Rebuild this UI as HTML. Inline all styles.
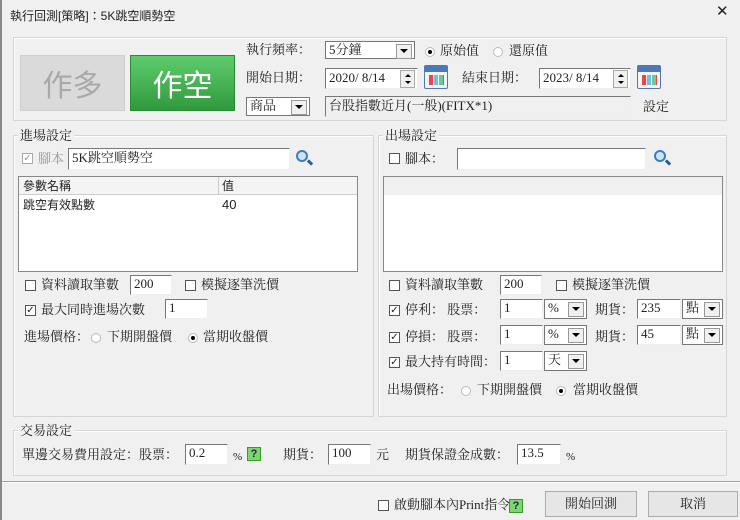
<!DOCTYPE html>
<html><head><meta charset="utf-8"><style>
*{box-sizing:border-box;margin:0;padding:0}
body{width:740px;height:520px;background:#f0f0f0;position:relative;overflow:hidden;font-family:"Liberation Serif","Noto Serif CJK SC","Noto Sans CJK TC",serif;font-size:13px;color:#222}
.a{position:absolute;white-space:nowrap}
.t{line-height:16px}
.grp{position:absolute;border:1px solid #d5d5d5;box-shadow:inset 1px 1px 0 #fff}
.lg{position:absolute;background:#f0f0f0;padding:0 2px;line-height:14px;font-size:13px}
.in{position:absolute;background:#fff;border:1px solid #aaa;border-right-color:#eee;border-bottom-color:#eee;border-top-color:#777;border-left-color:#777;padding-left:3px;line-height:16px;font-size:13px}
.sel{position:absolute;background:#fff;border:1px solid #777;padding-left:3px;font-size:13px;line-height:16px}
.sel:after{content:"";position:absolute;right:2px;top:2px;width:14px;height:13px;background:#f0f0f0;border:1px solid #999}
.sel i{position:absolute;right:6px;top:7px;border:4px solid transparent;border-top:4px solid #000;z-index:2;width:0;height:0;border-bottom:0}
.cb{position:absolute;width:11px;height:11px;border:1px solid #555;background:#fff;font-size:10px;line-height:9px;text-align:center;font-family:"DejaVu Sans",sans-serif}
.rd{position:absolute;width:10px;height:10px;border-radius:50%;background:#fff;border:1px solid #bbb}
.rd.on:after{content:"";position:absolute;left:2px;top:2px;width:4px;height:4px;border-radius:50%;background:#000}
.spin{position:absolute;width:15px;background:#f0f0f0;border:1px solid #aaa}
.spin:before{content:"";position:absolute;left:4px;top:3px;border:3px solid transparent;border-bottom:3px solid #000;border-top:0}
.spin:after{content:"";position:absolute;left:4px;bottom:3px;border:3px solid transparent;border-top:3px solid #000;border-bottom:0}
.cal{position:absolute;width:24px;height:24px;border:1px solid #5577aa;border-radius:2px;background:linear-gradient(#4a78b8 0 6px,#f4f4f4 6px)}
.cal:after{content:"";position:absolute;left:4px;top:9px;width:15px;height:10px;background:repeating-linear-gradient(90deg,#e44 0 4px,transparent 4px 5px,#7bd 5px 9px,transparent 9px 10px,#6c9 10px 14px,transparent 14px)}
.q{position:absolute;width:14px;height:14px;background:#7bd66b;border:1px solid #3a9a2a;color:#225;font-size:11px;line-height:12px;text-align:center;font-weight:bold;font-family:"Liberation Sans",sans-serif}
.mag{position:absolute;width:12px;height:12px;border-radius:50%;border:2px solid #3b7dc4;background:#cde4f8}
.mag:after{content:"";position:absolute;left:9px;top:9px;width:6px;height:3px;background:#2a5d9a;transform:rotate(45deg)}
.btn{position:absolute;background:#e6e6e6;border:1px solid #adadad;text-align:center;font-size:13px}
</style></head><body>
<div class="a" style="left:0;top:0;width:2px;height:520px;background:#888"></div>
<div class="a t" style="left:10px;top:8px;font-family:'Liberation Sans','Noto Sans CJK TC',sans-serif;font-size:12px">執行回測[策略]：5K跳空順勢空</div>
<div class="a" style="left:716px;top:2px;font-family:'DejaVu Sans',sans-serif;font-size:15px">✕</div>

<div class="grp" style="left:13px;top:37px;width:714px;height:84px"></div>
<div class="a" style="left:20px;top:55px;width:105px;height:56px;background:#dadada;border:1px solid #cfcfcf;color:#a9a9a9;font-size:30px;line-height:54px;text-align:center;font-family:'Noto Sans CJK TC',sans-serif">作多</div>
<div class="a" style="left:130px;top:55px;width:105px;height:56px;background:linear-gradient(#5fcc6c,#2f9a3d);border:1px solid #2a8a35;color:#fff;font-size:30px;line-height:54px;text-align:center;font-family:'Noto Sans CJK TC',sans-serif">作空</div>
<div class="a t" style="left:246px;top:42px">執行頻率：</div>
<div class="sel" style="left:325px;top:41px;width:90px;height:18px">5分鐘<i></i></div>
<div class="rd on" style="left:425px;top:47px"></div><div class="a t" style="left:440px;top:43px">原始值</div>
<div class="rd" style="left:493px;top:47px"></div><div class="a t" style="left:509px;top:43px">還原值</div>
<div class="a t" style="left:246px;top:70px">開始日期：</div>
<div class="in" style="left:325px;top:68px;width:93px;height:21px;line-height:18px">2020/ 8/14</div>
<div class="spin" style="left:400px;top:70px;height:18px"></div>
<div class="cal" style="left:424px;top:65px"></div>
<div class="a t" style="left:462px;top:70px">結束日期：</div>
<div class="in" style="left:539px;top:68px;width:92px;height:21px;line-height:18px">2023/ 8/14</div>
<div class="spin" style="left:613px;top:70px;height:18px"></div>
<div class="cal" style="left:637px;top:65px"></div>
<div class="sel" style="left:246px;top:97px;width:64px;height:19px">商品<i></i></div>
<div class="in" style="left:325px;top:96px;width:306px;height:21px;background:#f0f0f0;line-height:18px">台股指數近月(一般)(FITX*1)</div>
<div class="a t" style="left:643px;top:99px">設定</div>

<div class="grp" style="left:13px;top:135px;width:361px;height:282px"></div>
<div class="lg" style="left:18px;top:129px">進場設定</div>
<div class="cb" style="left:22px;top:153px;border-color:#aaa;color:#999">✓</div>
<div class="a t" style="left:38px;top:151px;color:#999">腳本</div>
<div class="in" style="left:68px;top:148px;width:222px;height:22px;line-height:18px">5K跳空順勢空</div>
<div class="mag" style="left:296px;top:150px"></div>
<div class="a" style="left:18px;top:176px;width:340px;height:96px;background:#fff;border:1px solid #888"></div>
<div class="a" style="left:19px;top:177px;width:338px;height:18px;background:#f4f4f4;border-bottom:1px solid #ccc"></div>
<div class="a" style="left:218px;top:177px;width:1px;height:18px;background:#ccc"></div>
<div class="a t" style="left:23px;top:178px;font-family:'Noto Sans CJK TC',sans-serif;font-size:12px">參數名稱</div>
<div class="a t" style="left:222px;top:178px;font-family:'Noto Sans CJK TC',sans-serif;font-size:12px">值</div>
<div class="a t" style="left:23px;top:197px;font-family:'Noto Sans CJK TC',sans-serif;font-size:12px">跳空有效點數</div>
<div class="a t" style="left:222px;top:197px;font-family:'Liberation Sans',sans-serif;font-size:13px">40</div>
<div class="cb" style="left:25px;top:280px"></div><div class="a t" style="left:41px;top:277px">資料讀取筆數</div>
<div class="in" style="left:130px;top:275px;width:42px;height:20px">200</div>
<div class="cb" style="left:185px;top:280px"></div><div class="a t" style="left:201px;top:277px">模擬逐筆洗價</div>
<div class="cb" style="left:25px;top:305px">✓</div><div class="a t" style="left:41px;top:302px">最大同時進場次數</div>
<div class="in" style="left:165px;top:299px;width:43px;height:20px">1</div>
<div class="a t" style="left:24px;top:329px">進場價格：</div>
<div class="rd" style="left:91px;top:333px"></div><div class="a t" style="left:107px;top:329px">下期開盤價</div>
<div class="rd on" style="left:188px;top:333px"></div><div class="a t" style="left:203px;top:329px">當期收盤價</div>

<div class="grp" style="left:378px;top:135px;width:349px;height:282px"></div>
<div class="lg" style="left:383px;top:129px">出場設定</div>
<div class="cb" style="left:389px;top:153px"></div><div class="a t" style="left:405px;top:151px">腳本：</div>
<div class="in" style="left:457px;top:148px;width:189px;height:22px"></div>
<div class="mag" style="left:654px;top:150px"></div>
<div class="a" style="left:383px;top:176px;width:340px;height:96px;background:#fff;border:1px solid #888"></div>
<div class="a" style="left:384px;top:177px;width:338px;height:18px;background:#f0f0f0"></div>
<div class="cb" style="left:389px;top:280px"></div><div class="a t" style="left:405px;top:277px">資料讀取筆數</div>
<div class="in" style="left:500px;top:275px;width:42px;height:20px">200</div>
<div class="cb" style="left:556px;top:280px"></div><div class="a t" style="left:572px;top:277px">模擬逐筆洗價</div>
<div class="cb" style="left:389px;top:305px">✓</div><div class="a t" style="left:405px;top:302px">停利：&nbsp;股票：</div>
<div class="in" style="left:500px;top:299px;width:43px;height:20px">1</div>
<div class="sel" style="left:544px;top:299px;width:43px;height:20px">%<i></i></div>
<div class="a t" style="left:595px;top:302px">期貨：</div>
<div class="in" style="left:637px;top:299px;width:44px;height:20px">235</div>
<div class="sel" style="left:682px;top:299px;width:41px;height:20px">點<i></i></div>
<div class="cb" style="left:389px;top:332px">✓</div><div class="a t" style="left:405px;top:329px">停損：&nbsp;股票：</div>
<div class="in" style="left:500px;top:325px;width:43px;height:20px">1</div>
<div class="sel" style="left:544px;top:325px;width:43px;height:20px">%<i></i></div>
<div class="a t" style="left:595px;top:329px">期貨：</div>
<div class="in" style="left:637px;top:325px;width:44px;height:20px">45</div>
<div class="sel" style="left:682px;top:325px;width:41px;height:20px">點<i></i></div>
<div class="cb" style="left:389px;top:357px">✓</div><div class="a t" style="left:405px;top:354px">最大持有時間：</div>
<div class="in" style="left:500px;top:351px;width:43px;height:20px">1</div>
<div class="sel" style="left:544px;top:351px;width:43px;height:20px">天<i></i></div>
<div class="a t" style="left:387px;top:382px">出場價格：</div>
<div class="rd" style="left:461px;top:386px"></div><div class="a t" style="left:477px;top:382px">下期開盤價</div>
<div class="rd on" style="left:556px;top:386px"></div><div class="a t" style="left:573px;top:382px">當期收盤價</div>

<div class="grp" style="left:13px;top:430px;width:714px;height:46px"></div>
<div class="lg" style="left:18px;top:424px">交易設定</div>
<div class="a t" style="left:22px;top:447px">單邊交易費用設定：股票：</div>
<div class="in" style="left:185px;top:444px;width:43px;height:21px">0.2</div>
<div class="a t" style="left:233px;top:449px;font-size:11px">%</div>
<div class="q" style="left:247px;top:447px">?</div>
<div class="a t" style="left:283px;top:447px">期貨：</div>
<div class="in" style="left:328px;top:444px;width:43px;height:21px">100</div>
<div class="a t" style="left:376px;top:447px">元</div>
<div class="a t" style="left:405px;top:447px">期貨保證金成數：</div>
<div class="in" style="left:517px;top:444px;width:44px;height:21px">13.5</div>
<div class="a t" style="left:566px;top:449px;font-size:11px">%</div>

<div class="a" style="left:2px;top:481px;width:738px;height:1px;background:#a0a0a0"></div>
<div class="a" style="left:2px;top:482px;width:738px;height:1px;background:#fff"></div>
<div class="cb" style="left:378px;top:500px"></div>
<div class="a t" style="left:394px;top:497px">啟動腳本內Print指令</div>
<div class="q" style="left:509px;top:499px">?</div>
<div class="btn" style="left:545px;top:491px;width:92px;height:26px;line-height:24px">開始回測</div>
<div class="btn" style="left:648px;top:491px;width:90px;height:26px;line-height:24px">取消</div>
</body></html>
